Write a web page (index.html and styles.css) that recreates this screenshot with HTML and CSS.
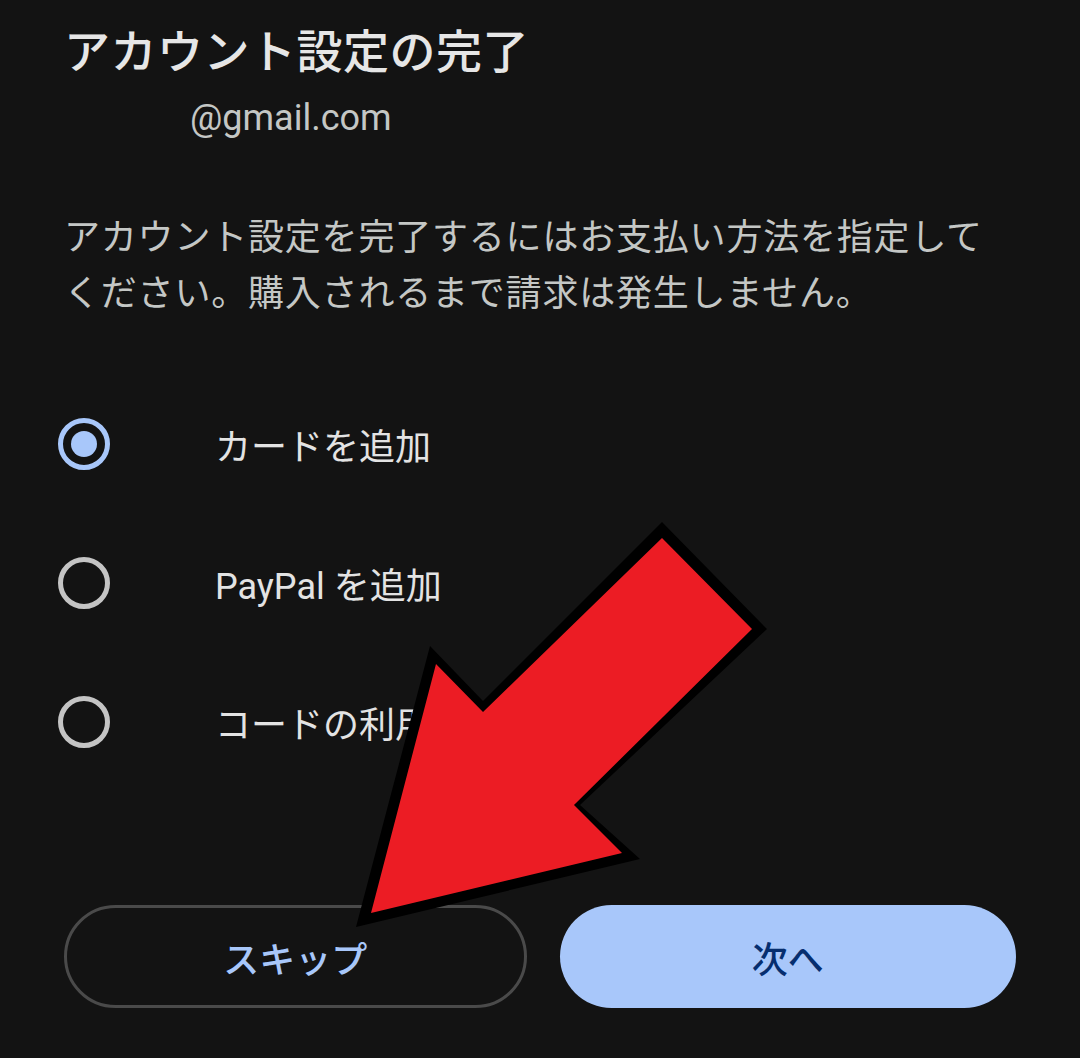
FILE: index.html
```html
<!DOCTYPE html>
<html lang="ja">
<head>
  <meta charset="UTF-8" />
  <meta name="viewport" content="width=device-width, initial-scale=1.0"/>
  <title>アカウント設定の完了</title>
  <link rel="stylesheet" href="styles.css">
</head>
<body>

  <main class="screen">
    <h1 class="title">アカウント設定の完了</h1>
    <p class="account">@gmail.com</p>

    <p class="desc">アカウント設定を完了するにはお支払い方法を指定してください。購入されるまで請求は発生しません。</p>

    <!-- 支払い方法の選択肢 -->
    <ul class="options">
      <li class="option">
        <span class="radio radio-checked"></span>
        <span class="option-label">カードを追加</span>
      </li>
      <li class="option">
        <span class="radio"></span>
        <span class="option-label">PayPal を追加</span>
      </li>
      <li class="option">
        <span class="radio"></span>
        <span class="option-label">コードの利用</span>
      </li>
    </ul>

    <div class="actions">
      <button class="btn btn-outline">スキップ</button>
      <button class="btn btn-filled">次へ</button>
    </div>

    <!-- 注釈の赤い矢印 -->
    <svg class="arrow" viewBox="0 0 1080 1058" width="1080" height="1058">
      <polygon class="arrow-edge" points="662,522 767,629 580,805 640,859 356,927 430,646 483,701"/>
      <polygon class="arrow-fill" points="662,538 752,629 574,805 622,853 371,913 436,664 483,712"/>
    </svg>
  </main>

</body>
</html>
```

FILE: styles.css
```css
* {
  margin: 0;
  padding: 0;
  box-sizing: border-box;
}

body {
  background: #131313;
  font-family: "Roboto", "Noto Sans CJK JP", sans-serif;
  color: #e3e3e3;
}

/* 画面全体 */
.screen {
  position: relative;
  width: 1080px;
  height: 1058px;
  padding: 22px 64px 0;
  display: flex;
  flex-direction: column;
  overflow: hidden;
}

.title {
  font-size: 46px;
  line-height: 60px;
  font-weight: 500;
  letter-spacing: 0.5px;
  color: #e6e6e6;
}

.account {
  margin: 14px 0 0 126px;
  font-size: 36px;
  line-height: 44px;
  color: #c4c7c5;
}

.desc {
  margin-top: 70px;
  font-size: 36px;
  line-height: 56px;
  letter-spacing: 0.8px;
  color: #c4c7c5;
}

/* 選択肢 */
.options {
  list-style: none;
  margin: 52px 0 0 -6px;
}

.option {
  height: 139px;
  display: flex;
  align-items: center;
}

.radio {
  width: 52px;
  height: 52px;
  border: 5px solid #c4c4c4;
  border-radius: 50%;
  flex-shrink: 0;
  display: flex;
  align-items: center;
  justify-content: center;
}

.radio-checked {
  border-color: #a8c7fa;
}

.radio-checked::after {
  content: "";
  width: 26px;
  height: 26px;
  border-radius: 50%;
  background: #a8c7fa;
}

.option-label {
  margin-left: 105px;
  font-size: 36px;
  color: #e3e3e3;
}

/* 下部ボタン */
.actions {
  margin-top: auto;
  margin-bottom: 50px;
  display: flex;
  gap: 33px;
}

.btn {
  flex: 1 1 0;
  min-width: 0;
  height: 103px;
  border-radius: 52px;
  font-family: inherit;
  font-size: 36px;
  font-weight: 500;
}

.btn-outline {
  background: transparent;
  border: 3px solid #4a4a4a;
  color: #a8c7fa;
}

.btn-filled {
  background: #a8c7fa;
  border: none;
  color: #062e6f;
}

/* 矢印は画面の上に重ねる */
.arrow {
  position: absolute;
  top: 0;
  left: 0;
  pointer-events: none;
}

.arrow-edge {
  fill: #000;
}

.arrow-fill {
  fill: #ec1c24;
}
```
